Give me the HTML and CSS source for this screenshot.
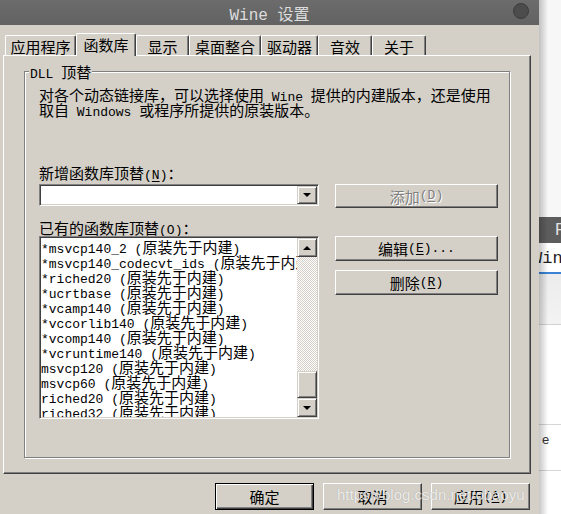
FILE: index.html
```html
<!DOCTYPE html>
<html>
<head>
<meta charset="utf-8">
<title>Wine 设置</title>
<link rel="stylesheet" href="styles.css">
</head>
<body>
<div class="screen">
  <div class="dialog">
    <div class="titlebar">
      <span class="title"><span class="m">Wine </span>设置</span>
      <span class="close"></span>
    </div>
    <div class="tabs">
      <div class="tab w71">应用程序</div>
      <div class="tab w60 active">函数库</div>
      <div class="tab w53">显示</div>
      <div class="tab w72">桌面整合</div>
      <div class="tab w57">驱动器</div>
      <div class="tab w54">音效</div>
      <div class="tab w54">关于</div>
    </div>
    <div class="panel">
      <div class="group">
        <div class="legend"><span class="m">DLL </span>顶替</div>
        <div class="content">
          <div class="desc">对各个动态链接库，可以选择使用<span class="m"> Wine </span>提供的内建版本，还是使用<br>取自<span class="m"> Windows </span>或程序所提供的原装版本。</div>
          <div class="label first">新增函数库顶替<span class="m">(<u>N</u>)</span>：</div>
          <div class="row-combo">
            <div class="combo">
              <div class="dropbtn"><span class="arrow-down"></span></div>
            </div>
            <div class="btn disabled add">添加<span class="m">(<u>D</u>)</span></div>
          </div>
          <div class="label second">已有的函数库顶替<span class="m">(<u>O</u>)</span>：</div>
          <div class="row-list">
            <div class="list">
              <div class="items">
                <div class="item"><span class="m">*msvcp140_2 (</span>原装先于内建<span class="m">)</span></div>
                <div class="item"><span class="m">*msvcp140_codecvt_ids (</span>原装先于内建<span class="m">)</span></div>
                <div class="item"><span class="m">*riched20 (</span>原装先于内建<span class="m">)</span></div>
                <div class="item"><span class="m">*ucrtbase (</span>原装先于内建<span class="m">)</span></div>
                <div class="item"><span class="m">*vcamp140 (</span>原装先于内建<span class="m">)</span></div>
                <div class="item"><span class="m">*vccorlib140 (</span>原装先于内建<span class="m">)</span></div>
                <div class="item"><span class="m">*vcomp140 (</span>原装先于内建<span class="m">)</span></div>
                <div class="item"><span class="m">*vcruntime140 (</span>原装先于内建<span class="m">)</span></div>
                <div class="item"><span class="m">msvcp120 (</span>原装先于内建<span class="m">)</span></div>
                <div class="item"><span class="m">msvcp60 (</span>原装先于内建<span class="m">)</span></div>
                <div class="item"><span class="m">riched20 (</span>原装先于内建<span class="m">)</span></div>
                <div class="item"><span class="m">riched32 (</span>原装先于内建<span class="m">)</span></div>
              </div>
              <div class="scrollbar">
                <div class="sbtn"><span class="arrow-up"></span></div>
                <div class="track"></div>
                <div class="thumb"></div>
                <div class="sbtn"><span class="arrow-down"></span></div>
              </div>
            </div>
            <div class="side-buttons">
              <div class="btn tall">编辑<span class="m">(<u>E</u>)...</span></div>
              <div class="btn tall">删除<span class="m">(<u>R</u>)</span></div>
            </div>
          </div>
        </div>
      </div>
    </div>
    <div class="footer">
      <div class="btn foot default">确定</div>
      <div class="btn foot">取消</div>
      <div class="btn foot">应用<span class="m">(<u>A</u>)</span></div>
    </div>
  </div>
  <div class="backdrop">
    <div class="bd-top"></div>
    <div class="bd-bar">P</div>
    <div class="bd-win">Wine</div>
    <div class="bd-blue"></div>
    <div class="bd-gray"></div>
    <div class="bd-white"></div>
    <div class="bd-e">e</div>
    <div class="bd-rest"></div>
  </div>
  <div class="watermark">https://blog.csdn.net/obaoyu</div>
</div>
</body>
</html>
```

FILE: styles.css
```css
* { box-sizing: border-box; }
html, body { margin: 0; padding: 0; }
body { width: 561px; height: 514px; overflow: hidden; background: #f6f6f6; }

.screen {
  display: flex;
  width: 561px;
  height: 514px;
  overflow: hidden;
  position: relative;
}

.dialog {
  width: 539px;
  flex: none;
  background: #d4d0c8;
  display: flex;
  flex-direction: column;
  font-family: "Noto Sans CJK SC", sans-serif;
  font-size: 15px;
  line-height: 15px;
  color: #000;
}

.m { font-family: "Liberation Mono", monospace; font-size: 13px; line-height: 0; }
u { text-decoration: underline; text-underline-offset: 2px; }

/* title bar */
.titlebar {
  height: 25px;
  flex: none;
  background: linear-gradient(#6c6c6c, #626262);
  display: grid;
  grid-template-columns: 1fr auto 1fr;
  align-items: center;
}
.title { grid-column: 2; color: #dcdcdc; font-size: 16px; line-height: 20px; }
.title .m { font-size: 16px; }
.close {
  grid-column: 3;
  justify-self: end;
  align-self: start;
  margin-top: 3px;
  margin-right: 10px;
  width: 16px;
  height: 16px;
  border-radius: 50%;
  background: #4c4c4c;
  border: 1px solid #3c3c3c;
}

/* tabs */
.tabs {
  height: 30px;
  flex: none;
  display: flex;
  align-items: flex-end;
  padding-left: 5px;
  position: relative;
  z-index: 2;
}
.tab {
  height: 20px;
  display: flex;
  align-items: center;
  justify-content: center;
  background: #d4d0c8;
  border-top: 1px solid #fff;
  border-left: 1px solid #fff;
  border-right: 1px solid #404040;
  box-shadow: inset -1px 0 #808080;
  border-radius: 2px 2px 0 0;
  padding-top: 1px;
}
.tab.active { height: 23px; margin-bottom: -1px; padding-bottom: 2px; }
.w71 { width: 71px; }
.w60 { width: 60px; }
.w53 { width: 53px; }
.w72 { width: 72px; }
.w57 { width: 57px; }
.w54 { width: 54px; }

/* panel */
.panel {
  flex: none;
  margin-left: 3px;
  width: 528px;
  height: 419px;
  border: 1px solid;
  border-color: #fff #404040 #404040 #fff;
  box-shadow: inset -1px -1px #808080;
  padding: 15px 0 0 20px;
  position: relative;
  z-index: 1;
}

.group {
  width: 486px;
  height: 387px;
  border: 1px solid #808080;
  box-shadow: 1px 1px 0 #fff, inset 1px 1px 0 #fff;
}
.legend {
  display: table;
  margin: -8px 0 0 4px;
  padding: 0 1px;
  background: #d4d0c8;
  line-height: 15px;
  white-space: nowrap;
}
.content { padding-left: 14px; }

.desc { margin-top: 8px; white-space: nowrap; }
.label { white-space: nowrap; height: 15px; }
.label.first { margin-top: 48px; }
.label.second { margin-top: 12px; }

.row-combo { display: flex; align-items: flex-start; margin-top: 4px; }
.combo {
  width: 280px;
  height: 22px;
  background: #fff;
  border: 1px solid;
  border-color: #808080 #fff #fff #808080;
  box-shadow: inset 1px 1px #404040, inset -1px -1px #d4d0c8;
  padding: 1px;
  display: flex;
  justify-content: flex-end;
}
.dropbtn, .sbtn {
  width: 20px;
  height: 18px;
  background: #d4d0c8;
  border: 1px solid;
  border-color: #d4d0c8 #404040 #404040 #d4d0c8;
  box-shadow: inset 1px 1px #fff, inset -1px -1px #808080;
  display: flex;
  align-items: center;
  justify-content: center;
}
.arrow-down {
  width: 0; height: 0;
  border-left: 4px solid transparent;
  border-right: 4px solid transparent;
  border-top: 4px solid #000;
}
.arrow-up {
  width: 0; height: 0;
  border-left: 4px solid transparent;
  border-right: 4px solid transparent;
  border-bottom: 4px solid #000;
}

.btn {
  display: flex;
  align-items: center;
  justify-content: center;
  background: #d4d0c8;
  border: 1px solid;
  border-color: #fff #404040 #404040 #fff;
  box-shadow: inset -1px -1px #808080;
  white-space: nowrap;
  color: #000;
}
.btn.disabled { color: #808080; text-shadow: 1px 1px 0 #fff; }
.add { width: 163px; height: 24px; margin-left: 16px; }

.row-list { display: flex; align-items: flex-start; margin-top: 1px; }
.list {
  width: 280px;
  height: 183px;
  background: #fff;
  border: 1px solid;
  border-color: #808080 #fff #fff #808080;
  box-shadow: inset 1px 1px #404040, inset -1px -1px #d4d0c8;
  padding: 1px;
  display: flex;
}
.items {
  flex: 1;
  min-width: 0;
  overflow: hidden;
  padding-top: 1px;
}
.item { height: 15px; line-height: 15px; white-space: nowrap; }
.scrollbar { width: 20px; flex: none; display: flex; flex-direction: column; }
.sbtn { height: 19px; flex: none; }
.track {
  flex: 1;
  background: repeating-conic-gradient(#fff 0 25%, #d4d0c8 0 50%) 0 0 / 2px 2px;
}
.thumb {
  height: 27px;
  flex: none;
  background: #d4d0c8;
  border: 1px solid;
  border-color: #d4d0c8 #404040 #404040 #d4d0c8;
  box-shadow: inset 1px 1px #fff, inset -1px -1px #808080;
}

.side-buttons { display: flex; flex-direction: column; gap: 9px; margin-left: 16px; }
.btn.tall { width: 163px; height: 25px; }

/* footer */
.footer {
  display: flex;
  justify-content: flex-end;
  gap: 9px;
  padding-right: 9px;
  margin-top: 9px;
}
.btn.foot { width: 99px; height: 27px; }
.btn.default {
  border: 1px solid #000;
  box-shadow: inset 1px 1px #fff, inset -1px -1px #404040, inset -2px -2px #808080;
}

/* background window on the right */
.backdrop {
  flex: 1;
  display: flex;
  flex-direction: column;
  position: relative;
  overflow: hidden;
  background: #fff;
}
.backdrop::before {
  content: "";
  position: absolute;
  left: 0; top: 0; bottom: 0;
  width: 9px;
  background: linear-gradient(to right, rgba(0,0,0,0.22), rgba(0,0,0,0));
  z-index: 1;
}
.bd-top { height: 217px; background: #f7f7f7; }
.bd-bar {
  height: 26px;
  background: #5d5d5d;
  color: #e2e2e2;
  font-family: "Liberation Sans", sans-serif;
  font-size: 17px;
  line-height: 26px;
  padding-left: 16px;
}
.bd-win {
  height: 29px;
  margin-left: -7px;
  font-family: "Liberation Mono", monospace;
  font-size: 17px;
  line-height: 32px;
  color: #222;
  white-space: nowrap;
}
.bd-blue { height: 2px; background: #3b82d6; }
.bd-gray { height: 51px; background: linear-gradient(#ececec, #f3f3f3); border-bottom: 1px solid #d2d2d2; }
.bd-white { height: 100px; border-bottom: 1px solid #d6d6d6; }
.bd-e {
  height: 46px;
  border-bottom: 1px solid #d6d6d6;
  font-family: "Liberation Sans", sans-serif;
  font-size: 13px;
  color: #333;
  padding: 8px 0 0 3px;
  line-height: 14px;
}
.bd-rest { flex: 1; background: #fff; }

.watermark {
  position: absolute;
  left: 337px;
  top: 486px;
  font-family: "Liberation Sans", sans-serif;
  font-size: 15px;
  line-height: 18px;
  color: rgba(255,255,255,0.8);
  text-shadow: 0 0 1px rgba(0,0,0,0.25);
  white-space: nowrap;
  z-index: 5;
}
```
